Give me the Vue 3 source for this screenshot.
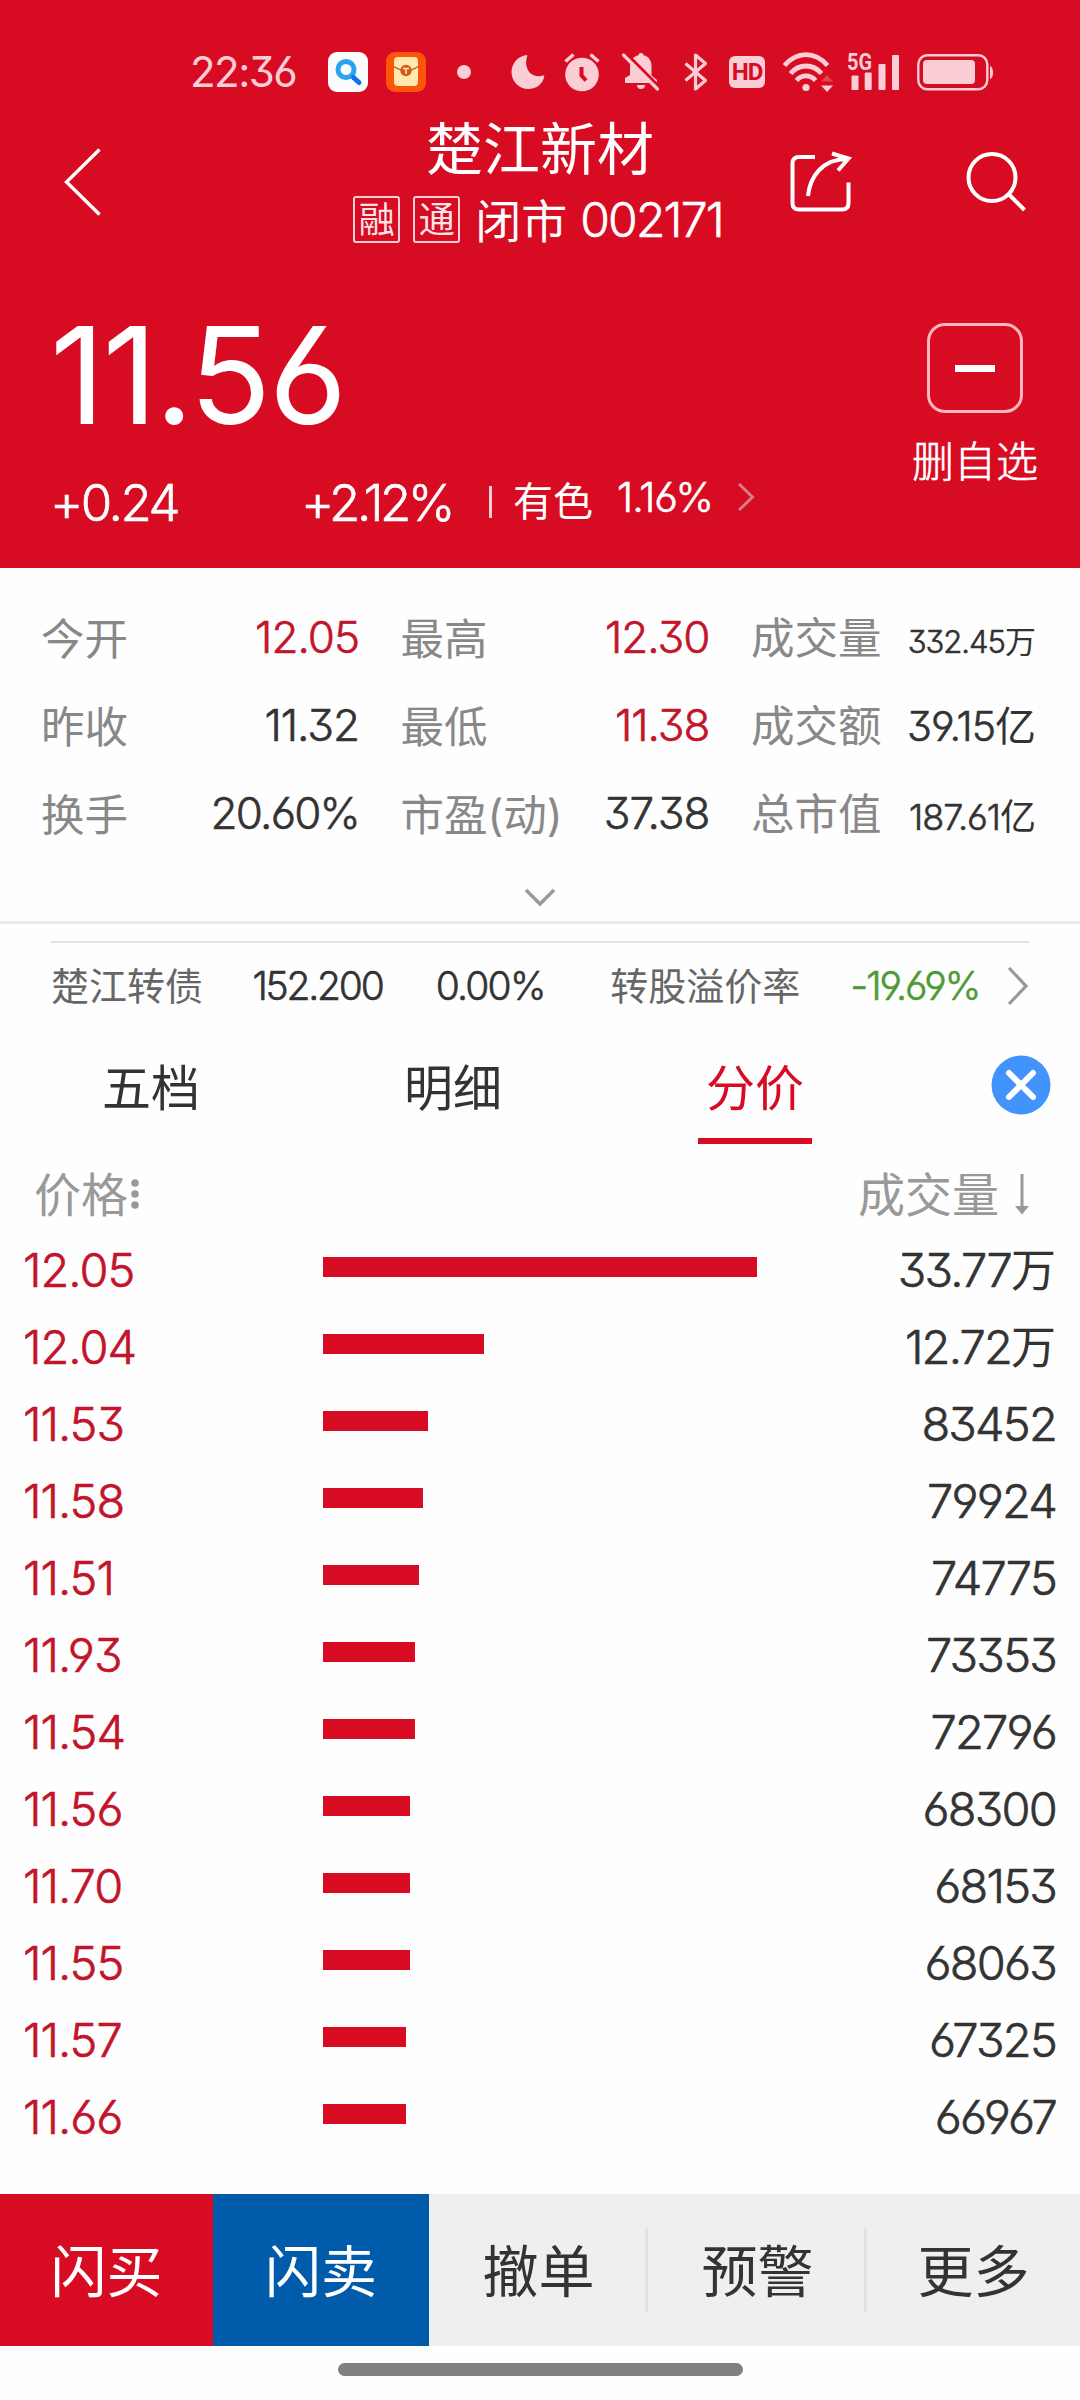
<script setup>
import { ref } from 'vue'

const stats = [
  [
    { label: '今开', value: '12.05', up: true },
    { label: '最高', value: '12.30', up: true },
    { label: '成交量', value: '332.45', unit: '万', size: 'xs' },
  ],
  [
    { label: '昨收', value: '11.32' },
    { label: '最低', value: '11.38', up: true },
    { label: '成交额', value: '39.15', unit: '亿', size: 'md' },
  ],
  [
    { label: '换手', value: '20.60%', size: 'rate' },
    { label: '市盈(动)', value: '37.38' },
    { label: '总市值', value: '187.61', unit: '亿', size: 'sm' },
  ],
]

const tabs = ['五档', '明细', '分价']
const activeTab = ref('分价')

const levels = [
  { price: '12.05', volume: '33.77', unit: '万', bar: 434 },
  { price: '12.04', volume: '12.72', unit: '万', bar: 161 },
  { price: '11.53', volume: '83452', bar: 105 },
  { price: '11.58', volume: '79924', bar: 100 },
  { price: '11.51', volume: '74775', bar: 96 },
  { price: '11.93', volume: '73353', bar: 92 },
  { price: '11.54', volume: '72796', bar: 92 },
  { price: '11.56', volume: '68300', bar: 87 },
  { price: '11.70', volume: '68153', bar: 87 },
  { price: '11.55', volume: '68063', bar: 87 },
  { price: '11.57', volume: '67325', bar: 83 },
  { price: '11.66', volume: '66967', bar: 83 },
]

const actions = [
  { text: '闪买', type: 'buy' },
  { text: '闪卖', type: 'sell' },
  { text: '撤单' },
  { text: '预警' },
  { text: '更多' },
]
</script>

<template>
  <div class="page">
    <header class="head">
      <div class="status">
        <span class="clock">22:36</span>
        <svg class="app" width="40" height="40" viewBox="0 0 40 40">
          <rect width="40" height="40" rx="9" fill="#fafcfe" />
          <circle cx="18" cy="17.5" r="8" fill="none" stroke="#2ba2ee" stroke-width="5" />
          <path d="M25.5 25.5L31 30.5" stroke="#0d74e4" stroke-width="5" stroke-linecap="round" />
        </svg>
        <svg class="app second" width="40" height="40" viewBox="0 0 40 40">
          <rect width="40" height="40" rx="9" fill="#fd560b" />
          <rect x="8" y="5" width="24" height="29" rx="4" fill="#ffe9ae" />
          <path d="M8 14.5Q20 23 32 14.5" fill="none" stroke="#b6622c" stroke-width="1.3" />
          <circle cx="20" cy="18.5" r="5.7" fill="#d9581a" />
          <path d="M17 16.5h6M20 16.5v5.5" stroke="#ffe9ae" stroke-width="1.6" />
        </svg>
        <i class="dot"></i>
        <svg class="moon" width="34" height="36" viewBox="0 0 34 36">
          <path d="M15.5 1C7 2 .5 9.5 .5 18A16.8 16.8 0 0 0 17.3 35C25.5 35 32 29.5 33.3 22.5C33.3 21.5 32.5 21.3 31.8 21.6C20 25 12.5 14 16 3C16.5 1.8 16.3 1 15.5 1Z" />
        </svg>
        <svg class="alarm" width="36" height="40" viewBox="0 0 36 40">
          <path d="M1.5 9.5L9.5 2.5M26.5 2.5L34.5 9.5" stroke-width="3.6" class="line" />
          <circle cx="18" cy="22.5" r="16.8" />
          <path d="M17.5 15v8.5l4.5 5" fill="none" stroke="#d70b22" stroke-width="4" />
        </svg>
        <svg class="bell" width="38" height="40" viewBox="0 0 38 40">
          <path d="M19 1c1.5 0 2.5 .8 2.5 2.3C27 4.5 29.5 9 29.5 14v9.5L35 28v3H3v-5l5-3V14C8 8.5 11 4.5 16.5 3.3C16.5 1.8 17.5 1 19 1ZM15 33h8a4 4 0 0 1-8 0Z" />
          <path d="M3.5 1L39 37" stroke="#d70b22" stroke-width="3.5" />
          <path d="M1.5 3L35.5 37" class="line" stroke-width="3.2" stroke-linecap="round" />
        </svg>
        <svg class="bt" width="24" height="40" viewBox="0 0 24 40">
          <path d="M1.5 11.5L21.5 28.5L11.5 37V3L21.5 11.5L1.5 28.5" fill="none" class="line" stroke-width="3.2" stroke-linejoin="round" />
        </svg>
        <span class="hd">HD</span>
        <svg class="wifi" width="52" height="40" viewBox="0 0 52 40">
          <path d="M1.5 13.5C14 -1 32 -1 44.5 13.5M7.5 21.5C16 11.5 30 11.5 38.5 21.5M13.5 28.5C18.5 22.3 27.5 22.3 32.5 28.5" fill="none" class="line" stroke-width="4.8" />
          <circle cx="23" cy="35.5" r="3.6" />
          <path d="M38 29.5l6-6.5l6 6.5z" fill="#e64354" />
          <path d="M38 33.5l6 6.5l6-6.5z" />
        </svg>
        <svg class="signal" width="54" height="40" viewBox="0 0 54 40">
          <text x="0" y="18" textLength="25" lengthAdjust="spacingAndGlyphs">5G</text>
          <rect x="4.5" y="23.5" width="7" height="14.5" rx="1" />
          <rect x="17.7" y="20.5" width="7" height="17.5" rx="1" />
          <rect x="31.5" y="12" width="7" height="26" rx="1" />
          <rect x="45" y="3" width="7" height="35" rx="1" />
        </svg>
        <svg class="battery" width="76" height="38" viewBox="0 0 76 38">
          <rect x="1.3" y="2.3" width="69" height="34" rx="9" fill="none" class="line" stroke-width="2.4" />
          <rect x="6" y="7" width="52" height="24" rx="4" />
          <path d="M73 13q3 1 3 6.5t-3 6.5z" />
        </svg>
      </div>

      <nav class="nav">
        <svg class="back" width="40" height="70" viewBox="0 0 40 70">
          <path d="M36.5 2.5L3.5 35L36.5 67.5" fill="none" stroke="#fff" stroke-width="3.4" />
        </svg>
        <div class="title">
          <div class="name">楚江新材</div>
          <div class="sub">
            <span class="tag">融</span>
            <span class="tag">通</span>
            <span class="market">闭市</span>
            <span class="code">002171</span>
          </div>
        </div>
        <div class="tools">
          <svg width="62" height="62" viewBox="0 0 62 62" class="tool">
            <path d="M25 6H9Q2.500 6 2.5 12.5V52Q2.5 58.5 9 58.5H52Q58.5 58.5 58.5 52V31.5" />
            <path d="M18 45C20 25 33 8 57 8M42 2.5L58.5 7.5L48 19.5" />
          </svg>
          <svg width="62" height="62" viewBox="0 0 62 62" class="tool search">
            <circle cx="27" cy="26.5" r="23.5" />
            <path d="M43.5 43L59.5 59" />
          </svg>
        </div>
      </nav>

      <div class="quote">
        <div class="quote-main">
          <div class="price">11.56</div>
          <div class="changes">
            <span class="diff">+0.24</span>
            <span class="pct">+2.12%</span>
            <i class="split"></i>
            <span class="sector">有色</span>
            <span class="sector-pct">1.16%</span>
            <svg width="18" height="30" viewBox="0 0 18 30">
              <path d="M2 2L15.5 15L2 28" fill="none" stroke="#d87d88" stroke-width="3" />
            </svg>
          </div>
        </div>
        <div class="watch">
          <div class="minus"><i></i></div>
          <div class="watch-text">删自选</div>
        </div>
      </div>
    </header>

    <section class="stats">
      <div v-for="(row, i) in stats" :key="i" class="stat-row">
        <div v-for="s in row" :key="s.label" class="stat">
          <span class="label">{{ s.label }}</span>
          <span class="num" :class="[s.size, { up: s.up }]">{{ s.value }}<em v-if="s.unit">{{ s.unit }}</em></span>
        </div>
      </div>
      <svg class="more" width="32" height="20" viewBox="0 0 32 20">
        <path d="M2 2L16 16L30 2" fill="none" stroke="#999" stroke-width="3.4" />
      </svg>
    </section>

    <section class="bond">
      <span class="bond-name">楚江转债</span>
      <span class="bond-price">152.200</span>
      <span class="bond-pct">0.00%</span>
      <span class="bond-label">转股溢价率</span>
      <span class="bond-rate">-19.69%</span>
      <svg width="22" height="40" viewBox="0 0 22 40">
        <path d="M2 2L19 20L2 38" fill="none" stroke="#999" stroke-width="3.2" />
      </svg>
    </section>

    <div class="tabs">
      <div v-for="t in tabs" :key="t" class="tab" :class="{ active: t === activeTab }" @click="activeTab = t">
        <span>{{ t }}</span>
      </div>
      <svg class="close" width="60" height="60" viewBox="0 0 60 60">
        <circle cx="30" cy="30" r="29.5" fill="#4393fd" />
        <path d="M18 18L42 42M42 18L18 42" stroke="#fff" stroke-width="6" stroke-linecap="round" />
      </svg>
    </div>

    <div class="list-head">
      <span>价格</span>
      <svg class="sort" width="8" height="32" viewBox="0 0 8 32">
        <circle cx="4" cy="5" r="3.8" /><circle cx="4" cy="16" r="3.8" /><circle cx="4" cy="27" r="3.8" />
      </svg>
      <span class="vol">成交量</span>
      <svg width="14" height="42" viewBox="0 0 14 42">
        <path d="M5.500 1h3v32H14L7 41.500L0 33H5.500z" />
      </svg>
    </div>

    <div class="list">
      <div v-for="l in levels" :key="l.price" class="level">
        <span class="level-price">{{ l.price }}</span>
        <div class="track"><div class="bar" :style="{ width: l.bar + 'px' }"></div></div>
        <span class="level-vol">{{ l.volume }}<em v-if="l.unit">{{ l.unit }}</em></span>
      </div>
    </div>

    <footer class="actions">
      <div v-for="a in actions" :key="a.text" class="action" :class="a.type">{{ a.text }}</div>
    </footer>
    <div class="home"><i></i></div>
  </div>
</template>

<style>
body { margin:0; background:#fff; }
</style>

<style scoped>
.page { width:1080px; height:2400px; display:flex; flex-direction:column; overflow:hidden; background:#fefefe; color:#333; font-family:Inter,"Noto Sans CJK SC",sans-serif; font-weight:400; font-feature-settings:"cv03","cv04","cv09"; line-height:1; white-space:nowrap; }
.page * { box-sizing:border-box; }
svg { display:block; flex:none; overflow:visible; }
i, em { font-style:normal; display:block; }
em { display:inline; font-weight:400; letter-spacing:0; -webkit-text-stroke:0; }

/* light digits, slightly thickened */
.code, .diff, .pct, .sector-pct, .watch-text, .num, .bond-price, .bond-pct, .bond-rate, .level-price, .level-vol { font-weight:300; -webkit-text-stroke:.6px; }

.head { height:568px; flex:none; background:#d70b22; color:#fff; }
.status { height:110px; display:flex; align-items:center; padding:34px 0 0 190px; fill:#fbcdd4; color:#fbcdd4; }
.status .line { stroke:#fbcdd4; }
.clock { width:138px; font-size:42px; letter-spacing:-1.5px; }
.second { margin-left:18px; }
.dot { width:14px; height:14px; border-radius:7px; background:#fbcdd4; margin-left:31px; }
.moon { margin-left:40px; }
.alarm { margin-left:19px; }
.bell { margin-left:22px; }
.bt { margin-left:24px; }
.hd { width:36px; height:32px; margin:0 0 0 21px; border-radius:6px; background:#fbcdd4; color:#d70b22; font:700 24px/33px Roboto,sans-serif; text-align:center; letter-spacing:-1px; }
.wifi { margin-left:18px; }
.signal { margin-left:12px; }
.signal text { font:700 24px Roboto,sans-serif; }
.battery { margin-left:16px; }

.nav { height:144px; display:grid; grid-template-columns:330px 1fr 330px; align-items:center; }
.back { margin-left:63px; }
.title { display:flex; flex-direction:column; align-items:center; gap:16px; padding-bottom:2px; }
.name { height:60px; font-size:57px; line-height:61px; }
.sub { height:48px; display:flex; align-items:center; margin-right:4px; }
.tag { width:47px; height:47px; border:2px solid #fbcdd4; border-radius:3px; color:#fde3e7; font-size:36px; line-height:44px; text-align:center; margin-right:13px; }
.market { font-size:46px; margin-left:2px; padding-top:3px; }
.code { font-size:48px; letter-spacing:-1.8px; margin-left:13px; padding-top:1px; }
.tools { display:flex; padding-left:40px; }
.tool { fill:none; stroke:#fff; stroke-width:4; }
.search { margin-left:113px; }

.quote { display:flex; justify-content:space-between; padding-top:54px; }
.quote-main { padding-left:50px; }
.price { font-size:135px; letter-spacing:-2.5px; }
.changes { height:60px; margin-top:29px; display:flex; align-items:center; }
.diff { width:251px; font-size:51px; letter-spacing:-2.5px; }
.pct { width:188px; font-size:51px; letter-spacing:-3.5px; }
.split { width:3px; height:32px; background:#fbcdd4; }
.sector { width:104px; margin-left:21px; font-size:40px; }
.sector-pct { width:120px; font-size:41px; letter-spacing:-1px; padding-bottom:9px; }
.changes svg { margin-bottom:10px; }
.watch { width:210px; padding-top:15px; display:flex; flex-direction:column; align-items:center; }
.minus { width:96px; height:90px; border:3px solid #fbb6bf; border-radius:18px; display:flex; align-items:center; justify-content:center; }
.minus i { width:40px; height:7px; background:#fff; }
.watch-text { margin-top:28px; font-size:42px; }

.stats { height:356px; flex:none; padding:25px 44px 0 41px; border-bottom:3px solid #e8eaea; }
.stat-row { height:88px; display:grid; grid-template-columns:318px 309px 285px; column-gap:41.5px; align-items:center; }
.stat { display:flex; align-items:baseline; justify-content:space-between; }
.label { font-size:43.5px; color:#888; transform:translateY(1.5px); }
.num { font-size:44px; letter-spacing:-1px; }
.rate { letter-spacing:-1.8px; }
.up { color:#c2142b; }
.xs { font-size:31px; transform:translateY(1px); }
.md { font-size:41px; transform:translateY(1px); }
.sm { font-size:36px; transform:translateY(2px); }
.more { margin:31px auto 0; transform:translateX(1px); }

.bond { height:91px; flex:none; margin:17px 51px 0; border-top:2px solid #e5e5e5; display:flex; align-items:center; font-size:39px; padding-bottom:4px; }
.bond-name, .bond-label { font-size:38px; color:#666; }
.bond-name { width:202px; }
.bond-price { width:184px; letter-spacing:-2.2px; }
.bond-pct { width:175px; letter-spacing:-1.8px; }
.bond-label { width:241px; }
.bond-rate { width:157px; letter-spacing:-2px; color:#4e9a35; }

.tabs { height:112px; flex:none; display:flex; }
.tab { width:302px; height:112px; padding-top:30px; text-align:center; font-size:49px; }
.tab span { display:inline-block; width:114px; height:82px; padding-top:2px; }
.active { color:#d70b22; }
.active span { border-bottom:6px solid #d70b22; }
.close { margin:23px 0 0 85px; }

.list-head { height:86px; flex:none; padding:14px 51px 0 34px; display:flex; align-items:center; font-size:47px; color:#999; fill:#999; }
.sort { margin-left:3px; }
.vol { margin-left:auto; margin-right:16px; }

.level { height:77px; display:grid; grid-template-columns:300px 1fr 280px; align-items:center; padding:0 25px 0 23px; font-size:47px; }
.level-price { color:#c2142b; letter-spacing:-1px; padding-top:2px; }
.level-vol { text-align:right; letter-spacing:-1.8px; padding-top:2px; margin-right:-1px; }
.level-vol em { font-size:45px; }
.bar { height:20px; background:#d70b22; margin-bottom:4px; }

.actions { height:152px; flex:none; margin-top:auto; display:grid; grid-template-columns:213px 216px 219px 219px 213px; background:#efefef; font-size:56px; line-height:157px; text-align:center; }
.action { height:152px; background:linear-gradient(#e3e3e3,#e3e3e3) right 34px / 3px 84px no-repeat; }
.action:last-child { background:none; }
.buy { background:#d70b22; color:#fff; }
.sell { background:#005bab; color:#fff; }
.home { height:54px; flex:none; display:flex; justify-content:center; padding-top:17px; }
.home i { width:405px; height:13px; border-radius:7px; background:#808080; }
</style>
